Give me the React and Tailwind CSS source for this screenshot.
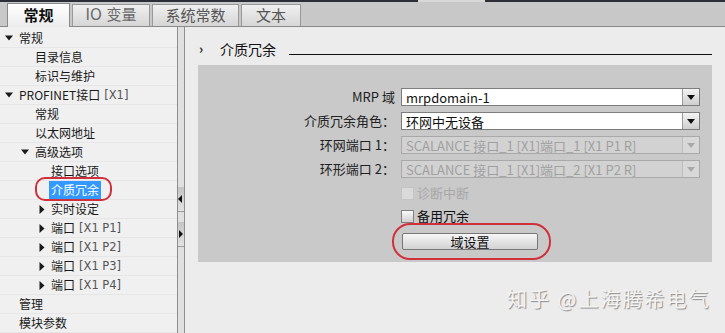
import React from 'react';

const FONT = "font-['Noto_Sans_CJK_SC','DejaVu_Sans',sans-serif]";

const DownTri = () => (
  <svg width="8" height="6" viewBox="0 0 8 6"><path d="M0 0.5h8L4 5.5z" fill="#1a1a1a" /></svg>
);
const RightTri = () => (
  <svg width="6" height="9" viewBox="0 0 6 9"><path d="M0.5 0v9l5-4.5z" fill="#1a1a1a" /></svg>
);

const treeRows = [
  { pad: 'pl-[5px]', arrow: 'down', text: '常规' },
  { pad: 'pl-[35px]', text: '目录信息' },
  { pad: 'pl-[35px]', text: '标识与维护' },
  { pad: 'pl-[5px]', arrow: 'down', text: 'PROFINET接口', tag: '[X1]' },
  { pad: 'pl-[35px]', text: '常规' },
  { pad: 'pl-[35px]', text: '以太网地址' },
  { pad: 'pl-[21px]', arrow: 'down', text: '高级选项' },
  { pad: 'pl-[51px]', text: '接口选项' },
  { pad: 'pl-[49px]', text: '介质冗余', selected: true },
  { pad: 'pl-[39px]', arrow: 'right', text: '实时设定' },
  { pad: 'pl-[39px]', arrow: 'right', text: '端口', tag: '[X1 P1]' },
  { pad: 'pl-[39px]', arrow: 'right', text: '端口', tag: '[X1 P2]' },
  { pad: 'pl-[39px]', arrow: 'right', text: '端口', tag: '[X1 P3]' },
  { pad: 'pl-[39px]', arrow: 'right', text: '端口', tag: '[X1 P4]' },
  { pad: 'pl-[19px]', text: '管理' },
  { pad: 'pl-[19px]', text: '模块参数' },
];

const Select = ({ value, disabled }) => (
  <div
    className={`w-[299px] h-[18px] flex border ${
      disabled ? 'border-[#a9a9a9] bg-[#d2d2d2]' : 'border-[#7d7d7d] bg-white'
    }`}
  >
    <div
      className={`flex-1 flex items-center px-[4px] text-[13px] leading-[15px] whitespace-nowrap ${
        disabled ? 'text-[#a0a0a0]' : 'text-[#111]'
      }`}
    >
      {value}
    </div>
    <div
      className={`w-[17px] flex items-center justify-center border-l ${
        disabled
          ? 'border-[#bdbdbd] bg-[#d8d8d8]'
          : 'border-[#9a9a9a] bg-gradient-to-b from-[#f4f4f4] to-[#cfcfcf]'
      }`}
    >
      <svg width="8" height="5" viewBox="0 0 8 5">
        <path d="M0 0h8L4 5z" fill={disabled ? '#a8a8a8' : '#111'} />
      </svg>
    </div>
  </div>
);

const FormRow = ({ label, children, className = '' }) => (
  <div className={`flex items-center h-[18px] ${className}`}>
    <div className="w-[197px] text-right text-[13px] leading-[18px] text-[#222] whitespace-nowrap">{label}</div>
    <div className="ml-[6px]">{children}</div>
  </div>
);

const Check = ({ label, disabled, className = '' }) => (
  <div className={`flex items-center h-[16px] pl-[203px] ${className}`}>
    <div
      className={`w-[13px] h-[13px] border ${
        disabled
          ? 'border-[#c4c4c4] bg-[#dadada]'
          : 'border-[#808080] bg-gradient-to-b from-[#fafafa] to-[#d0d0d0]'
      }`}
    />
    <span className={`ml-[3px] text-[13px] leading-[16px] ${disabled ? 'text-[#a8a8a8]' : 'text-[#111]'}`}>
      {label}
    </span>
  </div>
);

const App = () => {
  return (
    <div className={`relative w-[725px] h-[333px] overflow-hidden flex flex-col bg-[#ececec] ${FONT}`}>
      {/* top strip */}
      <div className="h-[2px] flex bg-[#2e2e38]">
        <div className="ml-[418px] w-[67px] bg-[#d8d8d8]" />
      </div>

      {/* Tabs */}
      <div className="h-[25px] flex items-end pl-[7px] gap-[2px] bg-[#c8c8c8] border-b border-[#8a8a8a]">
        <div className="w-[63px] h-[24px] -mb-px flex items-center justify-center border border-b-0 border-[#8a8a8a] bg-gradient-to-b from-[#ffffff] to-[#ececec] text-[15px] font-bold text-[#111]">
          常规
        </div>
        <div className="w-[78px] h-[22px] flex items-center justify-center border border-b-0 border-[#999] bg-gradient-to-b from-[#f0f0f0] to-[#d6d6d6] text-[15px] text-[#6a6a6a] font-['DejaVu_Sans','Noto_Sans_CJK_SC',sans-serif]">
          IO 变量
        </div>
        <div className="w-[87px] h-[22px] flex items-center justify-center border border-b-0 border-[#999] bg-gradient-to-b from-[#f0f0f0] to-[#d6d6d6] text-[15px] text-[#555]">
          系统常数
        </div>
        <div className="w-[60px] h-[22px] flex items-center justify-center border border-b-0 border-[#999] bg-gradient-to-b from-[#f0f0f0] to-[#d6d6d6] text-[15px] text-[#555]">
          文本
        </div>
      </div>

      <div className="flex-1 flex min-h-0">
        {/* Tree */}
        <div className="w-[177px] bg-[#f0f0f0] pt-[2px]">
          {treeRows.map((r, i) => (
            <div
              key={i}
              className={`relative h-[19px] flex items-center border-b border-[#e6e6e6] text-[12px] leading-[18px] text-[#1a1a1a] whitespace-nowrap ${r.pad}`}
            >
              {r.arrow === 'down' && (
                <span className="w-[14px] flex items-center"><DownTri /></span>
              )}
              {r.arrow === 'right' && (
                <span className="w-[12px] flex items-center"><RightTri /></span>
              )}
              {r.selected ? (
                <>
                  <span className="px-[2px] bg-[#3399ff] text-white">{r.text}</span>
                  <div className="absolute left-[35px] top-[-4px] w-[77px] h-[24px] rounded-[10px] border-2 border-[#d0303c]" />
                </>
              ) : (
                <span>{r.text}</span>
              )}
              {r.tag && (
                <span className="ml-[4px] text-[#555] font-['DejaVu_Sans',sans-serif] text-[11.5px]">{r.tag}</span>
              )}
            </div>
          ))}
        </div>

        {/* Splitter */}
        <div className="w-[8px] flex flex-col border-x border-[#8e8e8e] bg-[#e0e0e0]">
          <div className="h-[160px]" />
          <div className="h-[25px] flex items-center bg-gradient-to-b from-[#c4c4c4] to-[#e2e2e2] border-b border-[#9a9a9a]">
            <svg width="6" height="8" viewBox="0 0 6 8"><path d="M4 0v8L0 4z" fill="#111" /></svg>
          </div>
          <div className="h-[10px]" />
          <div className="h-[25px] flex items-center bg-gradient-to-b from-[#c4c4c4] to-[#e2e2e2] border-b border-[#9a9a9a]">
            <svg width="6" height="8" viewBox="0 0 6 8"><path d="M1 0v8l4-4z" fill="#111" /></svg>
          </div>
        </div>

        {/* Content */}
        <div className="flex-1 flex flex-col px-[13px] pt-[13px]">
          <div className="h-[18px] flex items-end">
            <span className="w-[22px] text-[13px] font-bold leading-[18px] pl-[1px] text-[#222]">›</span>
            <span className="text-[14px] leading-[18px] text-[#111]">介质冗余</span>
            <div className="flex-1 ml-[13px] mb-[3px] border-b border-[#111]" />
          </div>

          <div className="mt-[7px] h-[197px] bg-[#c9c9c9] pt-[23px]">
            <FormRow label="MRP 域">
              <Select value="mrpdomain-1" />
            </FormRow>
            <FormRow label="介质冗余角色：" className="mt-[6px]">
              <Select value="环网中无设备" />
            </FormRow>
            <FormRow label="环网端口 1：" className="mt-[6px]">
              <Select value="SCALANCE 接口_1 [X1]端口_1 [X1 P1 R]" disabled />
            </FormRow>
            <FormRow label="环形端口 2：" className="mt-[6px]">
              <Select value="SCALANCE 接口_1 [X1]端口_2 [X1 P2 R]" disabled />
            </FormRow>
            <Check label="诊断中断" disabled className="mt-[7px]" />
            <Check label="备用冗余" className="mt-[7px]" />
            <div className="mt-[9px] pl-[204px]">
              <div className="relative w-[136px] h-[17px] flex items-center justify-center border border-[#777] rounded-[2px] bg-gradient-to-b from-[#f7f7f7] to-[#d2d2d2] text-[13px] leading-[15px] text-[#111]">
                域设置
                <div className="absolute left-[-11px] top-[-11px] w-[159px] h-[37px] rounded-[18px] border-2 border-[#d0303c]" />
              </div>
            </div>
          </div>
        </div>
      </div>

      {/* watermark */}
      <div className="absolute left-[507px] top-[286px] text-[20px] leading-[26px] tracking-[2px] text-[#f4f4f4] [text-shadow:1px_1px_1px_#8a8a8a]">
        知乎 @上海腾希电气
      </div>
    </div>
  );
};

export default App;
